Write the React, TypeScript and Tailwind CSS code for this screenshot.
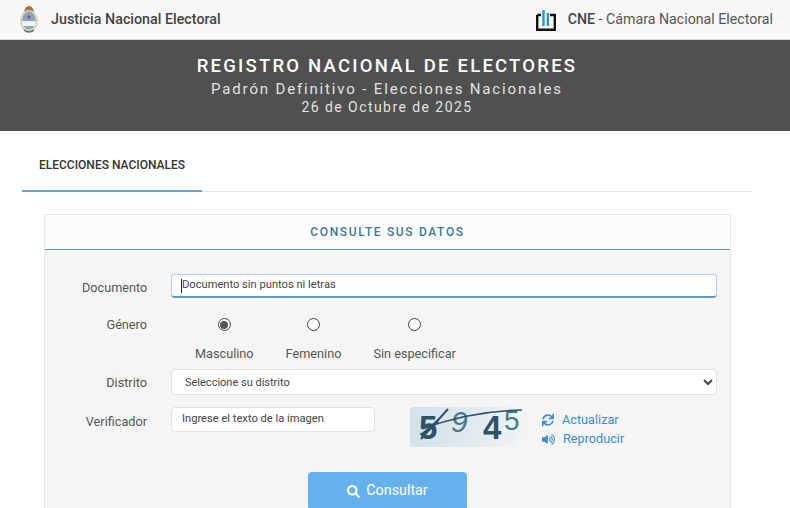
import React from 'react';
import { FaSync, FaVolumeUp, FaSearch } from 'react-icons/fa';

const Escudo = () => (
  <svg width="18" height="27" viewBox="0 0 18 27" aria-hidden="true">
    <path d="M4 6 Q5 0 9 0 Q13 0 14 6 Z" fill="#a8713f" />
    <ellipse cx="9" cy="15" rx="9" ry="11" fill="#d9d2b4" />
    <ellipse cx="9" cy="14.5" rx="6.6" ry="9" fill="#7fa8cc" />
    <rect x="2.4" y="15" width="13.2" height="5" fill="#f4f4f4" />
    <circle cx="9" cy="11" r="1.8" fill="#c4455e" />
    <path d="M4 24 Q9 28 14 24" stroke="#5f7350" strokeWidth="1.6" fill="none" />
  </svg>
);

const CneLogo = () => (
  <svg width="20" height="22" viewBox="0 0 20 22" aria-hidden="true">
    <path d="M1.2 6 V20.8 H18.8 V6 H14" stroke="#111" strokeWidth="2.4" fill="none" />
    <path d="M1.2 6 H5" stroke="#111" strokeWidth="2.4" />
    <path d="M7.5 1 V17" stroke="#2a93c9" strokeWidth="2.4" />
    <path d="M11.8 4 V17" stroke="#2a93c9" strokeWidth="2.4" />
  </svg>
);

const Captcha = () => (
  <svg width="120" height="40" viewBox="0 0 120 40" role="img" aria-label="captcha">
    <defs>
      <linearGradient id="captchaBg" x1="0" y1="0" x2="1" y2="0">
        <stop offset="0" stopColor="#d3e1ea" />
        <stop offset="0.7" stopColor="#e6edf1" />
        <stop offset="1" stopColor="#f5f5f5" />
      </linearGradient>
    </defs>
    <rect width="120" height="40" rx="2" fill="url(#captchaBg)" />
    <text x="9" y="32" fontFamily="Liberation Sans, sans-serif" fontWeight="700" fontSize="33" fill="#2f526b">5</text>
    <text x="41" y="25" fontFamily="Liberation Sans, sans-serif" fontStyle="italic" fontSize="30" fill="#47788a">9</text>
    <text x="73" y="32" fontFamily="Liberation Sans, sans-serif" fontWeight="700" fontSize="33" fill="#2f526b">4</text>
    <text x="94" y="23" fontFamily="Liberation Sans, sans-serif" fontSize="28" fill="#3f8087">5</text>
    <path d="M11 32 L38 2" stroke="#2f526b" strokeWidth="2" fill="none" />
    <path d="M12 22 Q60 4 112 3" stroke="#2f526b" strokeWidth="1.6" fill="none" />
    <path d="M12 28 L28 14" stroke="#2f526b" strokeWidth="3" fill="none" />
  </svg>
);

const Radio = ({ label, checked }: { label: string; checked?: boolean }) => (
  <div className="flex flex-col items-center">
    <div className="w-[13px] h-[13px] rounded-full border-[1.5px] border-[#444] bg-white flex items-center justify-center">
      {checked && <div className="w-[8px] h-[8px] rounded-full bg-[#555]" />}
    </div>
    <span className="mt-[14px] text-[12.7px] leading-[17px] text-[#555]">{label}</span>
  </div>
);

export default function App() {
  return (
    <div className="h-[508px] overflow-hidden bg-white font-['Roboto',sans-serif]">
      {/* Top bar */}
      <header className="h-[40px] bg-[#f8f8f8] border-b border-[#d8d8d8] flex items-center justify-between pl-[20px] pr-[17px]">
        <div className="flex items-center gap-[13px]">
          <Escudo />
          <span className="text-[14.3px] font-medium text-[#444]">Justicia Nacional Electoral</span>
        </div>
        <div className="flex items-center gap-[12px]">
          <CneLogo />
          <span className="text-[14.2px] text-[#555]">
            <span className="font-medium text-[#444]">CNE</span> - Cámara Nacional Electoral
          </span>
        </div>
      </header>

      {/* Title band */}
      <section className="h-[91px] bg-[#505050] text-white flex flex-col items-center pt-[15px] pr-[16px]">
        <h1 className="text-[18.5px] leading-[23px] font-medium tracking-[2.22px]">REGISTRO NACIONAL DE ELECTORES</h1>
        <p className="text-[15px] leading-[18px] tracking-[1.84px] text-[#e2e2e2] mt-[2px]">Padrón Definitivo - Elecciones Nacionales</p>
        <p className="text-[14px] leading-[16px] tracking-[1.44px] text-[#e2e2e2] mt-px">26 de Octubre de 2025</p>
      </section>

      {/* Tabs */}
      <div className="ml-[22px] mr-[38px] h-[61px] border-b border-[#e6e6e6] flex items-end">
        <div className="w-[180px] h-[61px] -mb-px border-b-2 border-[#5aa6d6] pl-[17px] pt-[26px]">
          <span className="block text-[12px] leading-[16px] font-medium text-[#333]">ELECCIONES NACIONALES</span>
        </div>
      </div>

      {/* Panel */}
      <main className="ml-[44px] mr-[59px] mt-[22px] h-[400px] bg-[#f5f5f5] border border-[#e6e6e6]">
        <div className="h-[35px] bg-[#fcfcfc] border-b border-[#5b9bb8] flex items-center justify-center">
          <h2 className="text-[12px] font-medium tracking-[1.65px] text-[#3d7a94]">CONSULTE SUS DATOS</h2>
        </div>

        <form className="pl-[37px] pr-[13px]">
          {/* Documento */}
          <div className="flex items-center mt-[24px]">
            <label className="w-[65px] pt-[3px] text-right text-[12.7px] text-[#555]">Documento</label>
            <div className="ml-[24px] flex-1 h-[24px] bg-white border border-[#a9cfe6] border-b-2 border-b-[#5b9bc4] rounded-sm flex items-center pl-[9px] text-[11.15px] text-[#444]">
              <span className="w-px h-[14px] bg-[#222]" />
              Documento sin puntos ni letras
            </div>
          </div>

          {/* Genero */}
          <div className="flex items-start mt-[18px]">
            <label className="w-[65px] text-right text-[12.7px] leading-[17px] text-[#555]">Género</label>
            <div className="ml-[24px] pl-[24px] flex gap-[32px] pt-[2px]">
              <Radio label="Masculino" checked />
              <Radio label="Femenino" />
              <Radio label="Sin especificar" />
            </div>
          </div>

          {/* Distrito */}
          <div className="flex items-center mt-[7px]">
            <label className="w-[65px] pt-px text-right text-[12.7px] text-[#555]">Distrito</label>
            <select className="ml-[24px] flex-1 h-[26px] bg-white border border-[#e2e2e2] rounded-sm pl-[9px] text-[11px] text-[#444]">
              <option>Seleccione su distrito</option>
            </select>
          </div>

          {/* Verificador */}
          <div className="flex items-start mt-[12px]">
            <label className="w-[65px] pt-[5px] text-right text-[12.7px] text-[#555]">Verificador</label>
            <div className="ml-[24px] w-[204px] h-[25px] bg-white border border-[#e2e2e2] rounded-sm flex items-center pl-[10px] text-[11.15px] text-[#444]">
              Ingrese el texto de la imagen
            </div>
            <div className="ml-[35px]">
              <Captcha />
            </div>
            <div className="ml-[12px] pt-[5px] flex flex-col gap-[3px] text-[12.7px] leading-[16px] text-[#3f8ac9]">
              <span className="flex items-center gap-[8px]"><FaSync size={12} />Actualizar</span>
              <span className="flex items-center gap-[8px]"><FaVolumeUp size={13} />Reproducir</span>
            </div>
          </div>

          <div className="flex justify-center mt-[25px] pr-[24px]">
            <button type="button" className="w-[159px] h-[38px] bg-[#64b1ee] rounded-sm text-white text-[14.3px] flex items-center justify-center gap-[6px]">
              <FaSearch size={13} />
              Consultar
            </button>
          </div>
        </form>
      </main>
    </div>
  );
}
